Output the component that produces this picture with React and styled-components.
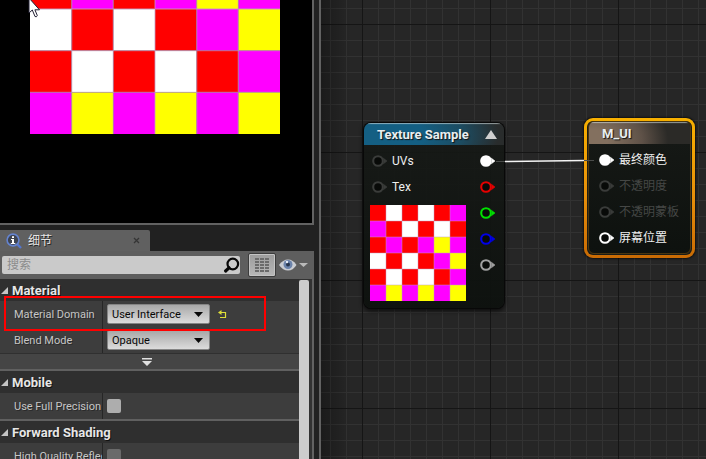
import React, { useState } from "react";
import styled, { createGlobalStyle, css } from "styled-components";

const sans = `Roboto, "Noto Sans CJK SC", sans-serif`;

const GlobalStyle = createGlobalStyle`
  *, *::before, *::after { box-sizing: border-box; }
  body { margin: 0; background: #222; font-family: ${sans}; font-size: 11px; color: #c8c8c8; }
  button, input, select { font-family: inherit; margin: 0; }
`;

const Editor = styled.main`
  display: flex;
  height: 100vh;
  overflow: hidden;
`;

const Sidebar = styled.div`
  flex: 0 0 321px;
  display: flex;
  flex-direction: column;
  padding-right: 5px;
  background: #212121;
  border-right: 2px solid #626262;
`;

const Viewport = styled.section`
  position: relative;
  flex: 0 0 225px;
  overflow: hidden;
  padding-left: 30px;
  background: #000;
  border: solid #626262;
  border-width: 0 2px 2px 0;
`;

const PreviewTexture = styled.svg`
  display: block;
  width: 250px;
  height: 250px;
  margin-top: -116px;
`;

const Cursor = styled.svg`
  position: absolute;
  left: 28px;
  top: 0;
`;

const Details = styled.section`
  flex: 1;
  min-height: 0;
  display: flex;
  flex-direction: column;
`;

const TabStrip = styled.div`
  flex: none;
  display: flex;
  align-items: flex-end;
  height: 26px;
`;

const Tab = styled.div`
  display: flex;
  align-items: center;
  width: 150px;
  height: 21px;
  padding: 0 10px 0 5px;
  gap: 5px;
  background: #606060;
  border-radius: 0 2px 0 0;
  color: #e4e4e4;
  font-size: 12px;
  line-height: 16px;
  text-shadow: 1px 1px 0 #222;
`;

const TabTitle = styled.span`
  flex: 1;
`;

const PlainButton = styled.button`
  display: flex;
  align-items: center;
  justify-content: center;
  padding: 0;
  border: 0;
  background: none;
  color: inherit;
`;

const Toolbar = styled.div`
  flex: none;
  display: flex;
  align-items: center;
  height: 28px;
  padding: 0 5px 0 2px;
  background: #5e5e5e;
`;

const SearchBox = styled.div`
  flex: 1;
  display: flex;
  align-items: center;
  height: 18px;
  margin-right: 8px;
  background: #cacaca;
  border-radius: 2px;
`;

const SearchInput = styled.input`
  flex: 1;
  min-width: 0;
  height: 18px;
  padding: 0 5px;
  border: 0;
  background: none;
  outline: 0;
  color: #222;
  font-size: 12px;
  &::placeholder { color: #8c8c8c; opacity: 1; }
`;

const GridButton = styled(PlainButton)`
  width: 28px;
  height: 24px;
  margin-right: 2px;
  background: linear-gradient(#9c9c9c, #b8b8b8);
  border: 1px solid #3c3c3c;
  border-radius: 2px;
  box-shadow: inset 0 0 0 1px #c4c4c4;
`;

const EyeButton = styled(PlainButton)`
  width: 31px;
  height: 24px;
`;

const PropertyArea = styled.div`
  position: relative;
  flex: 1;
  min-height: 0;
  display: flex;
  overflow: hidden;
  background: #3d3d3d;
  border-right: 2px solid #626262;
`;

const PropertyList = styled.div`
  flex: 1;
  min-width: 0;
`;

const ScrollTrack = styled.div`
  flex: 0 0 13px;
  padding-top: 1px;
  background: #323232;
`;

const ScrollThumb = styled.div`
  width: 10px;
  height: 100%;
  background: #cdcdcd;
  border-radius: 2px 2px 0 0;
`;

const Category = styled.section`
  border-bottom: 2px solid #606060;
`;

const CategoryHeader = styled.button`
  display: flex;
  align-items: center;
  gap: 4px;
  width: 100%;
  height: 22px;
  padding: 0 0 0 1px;
  border: 0;
  background: #2f2f2f;
  color: #e6e6e6;
  font-size: 13px;
  font-weight: 700;
  text-shadow: 1px 1px 0 #111;
`;

const Property = styled.div`
  display: flex;
  align-items: center;
  height: 26px;
  background: #3d3d3d;
`;

const PropertyLabel = styled.label`
  flex: 0 0 103px;
  height: 26px;
  padding-left: 14px;
  border-right: 1px solid #262626;
  line-height: 28px;
  white-space: nowrap;
  overflow: hidden;
  color: #c6c6c6;
  text-shadow: 1px 1px 0 #2a2a2a;
`;

const PropertyValue = styled.div`
  flex: 1;
  display: flex;
  align-items: center;
  gap: 8px;
  padding-left: 4px;
`;

const Dropdown = styled.select`
  appearance: none;
  width: 103px;
  height: 20px;
  padding: 0 16px 0 4px;
  border: 1px solid #858585;
  border-radius: 2px;
  background: linear-gradient(#a8a8a8, #dcdcdc);
  color: #080808;
  font-size: 11px;
`;

const DropdownFrame = styled.span`
  position: relative;
  display: flex;
`;

const DropdownArrow = styled.svg`
  position: absolute;
  right: 7px;
  top: 8px;
  pointer-events: none;
`;

const Checkbox = styled.input`
  appearance: none;
  width: 14px;
  height: 14px;
  border-radius: 2px;
  background: ${(p) => (p.disabled ? "#6a6a6a" : "#adadad")};
`;

const Expander = styled(PlainButton)`
  width: 100%;
  height: 16px;
  padding-right: 5px;
  background: #454545;
  border-top: 1px solid #303030;
`;

const Highlight = styled.div`
  position: absolute;
  left: 4px;
  top: 17px;
  width: 262px;
  height: 35px;
  border: 2px solid #f00;
  pointer-events: none;
`;

const Graph = styled.section`
  position: relative;
  flex: 1;
  min-width: 0;
  overflow: hidden;
  background:
    linear-gradient(90deg, rgba(0, 0, 0, 0.3), transparent 30px),
    linear-gradient(90deg, #151515 1px, transparent 1px) 41px 0 / 128px 128px,
    linear-gradient(#151515 1px, transparent 1px) 0 24px / 128px 128px,
    linear-gradient(90deg, #323232 1px, transparent 1px) 9px 0 / 16px 16px,
    linear-gradient(#323232 1px, transparent 1px) 0 8px / 16px 16px,
    #262626;
`;

const Wire = styled.svg`
  position: absolute;
  left: 165px;
  top: 150px;
`;

const nodeBody = css`
  position: absolute;
  overflow: hidden;
  color: #eee;
  background: linear-gradient(rgba(22, 25, 22, 0.9), rgba(13, 17, 14, 0.95));
`;

const SampleNode = styled.article`
  ${nodeBody}
  left: 43px;
  top: 123px;
  width: 140px;
  padding-bottom: 7px;
  border-radius: 7px;
  box-shadow: 0 0 0 1px #080808, 0 2px 4px 1px rgba(0, 0, 0, 0.7);
`;

const ResultNode = styled.article`
  ${nodeBody}
  left: 267px;
  top: 121px;
  width: 103px;
  padding-bottom: 2px;
  border: 1px solid #493610;
  border-radius: 6px;
`;

const Selection = styled.div`
  position: absolute;
  left: 263px;
  top: 118px;
  width: 111px;
  height: 140px;
  border-radius: 9px;
  background: linear-gradient(#f7b000, #e8900a 55%, #c96b04);
  box-shadow: 0 0 2px 1px rgba(0, 0, 0, 0.6);
  padding: 3px;
  &::after {
    content: "";
    display: block;
    height: 100%;
    border-radius: 6px;
    background: #191b18;
  }
`;

const NodeHeader = styled.header`
  display: flex;
  align-items: center;
  justify-content: space-between;
  height: 22px;
  padding: 1px 7px 0 13px;
  background: ${(p) =>
    p.$tone === "sample"
      ? "radial-gradient(ellipse 125px 50px at 10px 12px, #145f83 40%, #1c4d63 70%, #292c2c 100%)"
      : "radial-gradient(ellipse 75px 50px at 4px 18px, #83705f 20%, #5f5248 65%, #2b2a27 100%)"};
  box-shadow: inset 0 2px 1px -1px rgba(220, 230, 230, 0.6);
`;

const NodeTitle = styled.h2`
  margin: 0;
  font-size: 13px;
  line-height: 20px;
  font-weight: 700;
  color: #e8eef0;
  text-shadow: 1px 1px 1px #111;
  white-space: nowrap;
`;

const NodeColumns = styled.div`
  display: flex;
  justify-content: space-between;
  padding: 3px 8px 0 6px;
`;

const PinList = styled.ul`
  list-style: none;
  margin: 0;
  padding: 0;
`;

const ResultPins = styled(PinList)`
  padding: 3px 0 0 10px;
`;

const Pin = styled.li`
  display: flex;
  align-items: center;
  gap: 4px;
  height: 26px;
  padding-left: ${(p) => (p.$inset ? "2px" : "0")};
  font-size: 12px;
  line-height: 18px;
  white-space: nowrap;
  color: ${(p) => (p.$dim ? "#454745" : "#efefef")};
`;

const NodeTexture = styled.svg`
  display: block;
  width: 96px;
  height: 96px;
  margin-top: 5px;
`;

const CELLS = ["RWRWRM", "MRWRWR", "RMRMYM", "WRWRMY", "RWRWRM", "MYMYMY"];
const CELL_COLORS = { R: "#ff0000", W: "#ffffff", M: "#ff00ff", Y: "#ffff00" };

function Checker({ as: Frame, edge }) {
  return (
    <Frame viewBox="0 0 96 96" role="img" aria-label="Checker texture" preserveAspectRatio="none">
      {CELLS.flatMap((row, y) =>
        [...row].map((c, x) => (
          <rect key={`${x}-${y}`} x={x * 16} y={y * 16} width="16" height="16" fill={CELL_COLORS[c]} />
        ))
      )}
      {[16, 32, 48, 64, 80].map((p) => (
        <path key={p} d={`M${p} 0V96M0 ${p}H96`} stroke="#c09cc0" strokeOpacity="0.6" strokeWidth={edge} />
      ))}
    </Frame>
  );
}

function PinIcon({ color, filled }) {
  return (
    <svg width="16" height="14" viewBox="0 0 16 14" aria-hidden="true">
      <circle cx="6" cy="7" r="4.8" fill={filled ? color : "#080a08"} stroke={color} strokeWidth="2.1" />
      <path d="M11.4 4.2Q12.6 7 11.4 9.8L15 7Z" fill={color} stroke={color} strokeWidth="0.6" />
    </svg>
  );
}

function Select({ id, options }) {
  return (
    <DropdownFrame>
      <Dropdown id={id}>
        {options.map((o) => <option key={o}>{o}</option>)}
      </Dropdown>
      <DropdownArrow width="9" height="5" aria-hidden="true"><path d="M0 0H9L4.5 5Z" fill="#080808" /></DropdownArrow>
    </DropdownFrame>
  );
}

function CategoryBlock({ title, children }) {
  const [open, setOpen] = useState(true);
  return (
    <Category>
      <CategoryHeader aria-expanded={open} onClick={() => setOpen(!open)}>
        <svg width="7" height="7" aria-hidden="true"><path d="M7 0V7H0Z" fill="#c4c4c4" /></svg>
        {title}
      </CategoryHeader>
      {open && children}
    </Category>
  );
}

function Row({ id, label, children }) {
  return (
    <Property>
      <PropertyLabel htmlFor={id}>{label}</PropertyLabel>
      <PropertyValue>{children}</PropertyValue>
    </Property>
  );
}

function InfoIcon() {
  return (
    <svg width="18" height="16" viewBox="0 0 18 16" aria-hidden="true">
      <path d="M11 10L16 15" stroke="#5577cf" strokeWidth="2.4" />
      <circle cx="8" cy="7" r="5.9" fill="#3e4450" stroke="#6483cf" strokeWidth="1.6" />
      <path d="M7 3.2H9V5H7ZM6 6H9V10H10.3V11H5.8V10H7V7H6Z" fill="#fff" />
    </svg>
  );
}

export default function App() {
  return (
    <Editor>
      <GlobalStyle />
      <Sidebar>
        <Viewport aria-label="Preview">
          <Checker as={PreviewTexture} edge="0.5" />
          <Cursor width="14" height="19" viewBox="0 0 14 19" aria-hidden="true">
            <path d="M1 -2V13L4.3 10L7 16.5Q8.6 17.5 9.3 15.5L6.9 9.8H11.5Z" fill="#fff" stroke="#222034" />
          </Cursor>
        </Viewport>
        <Details>
          <TabStrip>
            <Tab>
              <InfoIcon />
              <TabTitle>细节</TabTitle>
              <PlainButton aria-label="Close tab">
                <svg width="7" height="7" aria-hidden="true"><path d="M1 1L6 6M6 1L1 6" stroke="#353535" strokeWidth="1.3" /></svg>
              </PlainButton>
            </Tab>
          </TabStrip>
          <Toolbar>
            <SearchBox>
              <SearchInput aria-label="搜索" placeholder="搜索" />
              <PlainButton aria-label="Search">
                <svg width="17" height="17" viewBox="0 0 17 17" aria-hidden="true">
                  <circle cx="9.8" cy="7" r="5.3" fill="none" stroke="#080808" strokeWidth="2.2" />
                  <path d="M6 10.8L2.6 14" stroke="#080808" strokeWidth="3.2" strokeLinecap="round" />
                </svg>
              </PlainButton>
            </SearchBox>
            <GridButton aria-label="Property matrix">
              <svg width="14" height="14" aria-hidden="true">
                <path d="M0 1H14M0 4H14M0 7H14M0 10H14M0 13H14" stroke="#6b6b6b" strokeWidth="2" strokeDasharray="4 1" />
              </svg>
            </GridButton>
            <EyeButton aria-label="View options">
              <svg width="31" height="14" viewBox="0 0 31 14" aria-hidden="true">
                <path d="M1 7Q5 1.5 10 1.5T18.500 7Q15 12.500 10 12.500T1 7Z" fill="#c9ccd2" />
                <circle cx="10" cy="6.500" r="4.500" fill="#6b83ab" />
                <circle cx="10" cy="6.500" r="2" fill="#26354d" />
                <circle cx="9" cy="4" r="1.200" fill="#e8eef8" />
                <path d="M21 5H30L25.500 9Z" fill="#bababa" />
              </svg>
            </EyeButton>
          </Toolbar>
          <PropertyArea>
            <PropertyList>
              <CategoryBlock title="Material">
                <Row id="domain" label="Material Domain">
                  <Select id="domain" options={["User Interface", "Surface"]} />
                  <PlainButton aria-label="Reset to default">
                    <svg width="9" height="9" aria-hidden="true">
                      <path d="M1 2.5H7.500V7.500H2" fill="none" stroke="#dede38" strokeWidth="1.200" />
                      <path d="M0 2.500L3.500 0V5Z" fill="#dede38" />
                    </svg>
                  </PlainButton>
                </Row>
                <Row id="blend" label="Blend Mode">
                  <Select id="blend" options={["Opaque", "Masked", "Translucent"]} />
                </Row>
                <Expander aria-label="Show advanced">
                  <svg width="10" height="8" aria-hidden="true"><path d="M0 0H10V1.5H0ZM0 3H10L5 8Z" fill="#e0e0e0" /></svg>
                </Expander>
              </CategoryBlock>
              <CategoryBlock title="Mobile">
                <Row id="precision" label="Use Full Precision">
                  <Checkbox type="checkbox" id="precision" />
                </Row>
              </CategoryBlock>
              <CategoryBlock title="Forward Shading">
                <Row id="reflections" label="High Quality Reflections">
                  <Checkbox type="checkbox" id="reflections" disabled />
                </Row>
              </CategoryBlock>
            </PropertyList>
            <ScrollTrack><ScrollThumb /></ScrollTrack>
            <Highlight />
          </PropertyArea>
        </Details>
      </Sidebar>
      <Graph aria-label="Material graph">
        <Selection />
        <SampleNode>
          <NodeHeader $tone="sample">
            <NodeTitle>Texture Sample</NodeTitle>
            <PlainButton aria-label="Collapse">
              <svg width="12" height="9" aria-hidden="true"><path d="M6 0L12 9H0Z" fill="#cfcfcf" /></svg>
            </PlainButton>
          </NodeHeader>
          <NodeColumns>
            <div>
              <PinList>
                <Pin $inset><PinIcon color="#3a3c3a" />UVs</Pin>
                <Pin $inset><PinIcon color="#3a3c3a" />Tex</Pin>
              </PinList>
              <Checker as={NodeTexture} edge="0.8" />
            </div>
            <PinList>
              <Pin><PinIcon color="#fff" filled /></Pin>
              <Pin><PinIcon color="#e60000" /></Pin>
              <Pin><PinIcon color="#00e000" /></Pin>
              <Pin><PinIcon color="#0000e6" /></Pin>
              <Pin><PinIcon color="#a0a0a0" /></Pin>
            </PinList>
          </NodeColumns>
        </SampleNode>
        <ResultNode>
          <NodeHeader $tone="result"><NodeTitle>M_UI</NodeTitle></NodeHeader>
          <ResultPins>
            <Pin><PinIcon color="#fff" filled />最终颜色</Pin>
            <Pin $dim><PinIcon color="#3a3c3a" />不透明度</Pin>
            <Pin $dim><PinIcon color="#3a3c3a" />不透明蒙板</Pin>
            <Pin><PinIcon color="#fff" />屏幕位置</Pin>
          </ResultPins>
        </ResultNode>
        <Wire width="110" height="20" aria-hidden="true">
          <path d="M10 11.5L19 11.5M98 10.5H108" stroke="#4a4c4a" />
          <path d="M19 11.5L98 10.5" stroke="#f4f4f4" strokeWidth="1.5" />
        </Wire>
      </Graph>
    </Editor>
  );
}
